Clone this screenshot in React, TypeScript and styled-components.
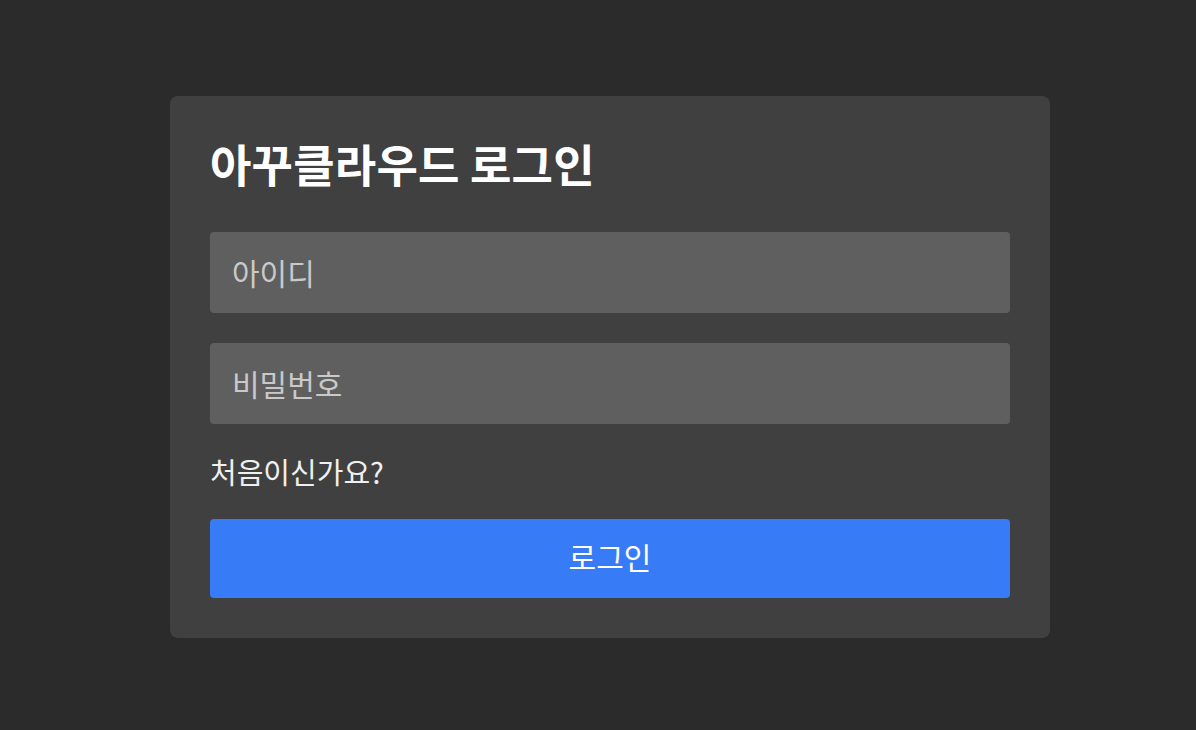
import React, { FC, useState } from 'react';
import styled, { createGlobalStyle } from 'styled-components';

const GlobalStyle = createGlobalStyle`
  body {
    margin: 0;
    background: #2b2b2b;
    font-family: 'Noto Sans CJK KR', 'Noto Sans', sans-serif;
  }
`;

const App: FC = () => {
  const [id, setId] = useState('');
  const [password, setPassword] = useState('');

  return (
    <PageWrapper>
      <GlobalStyle />
      <LoginCard onSubmit={(e) => e.preventDefault()}>
        <LoginTitle>아꾸클라우드 로그인</LoginTitle>
        <LoginInput placeholder="아이디" value={id} onChange={(e) => setId(e.target.value)} />
        <LoginInput
          type="password"
          placeholder="비밀번호"
          value={password}
          onChange={(e) => setPassword(e.target.value)}
        />
        <RegisterText>처음이신가요?</RegisterText>
        <LoginButton type="submit">로그인</LoginButton>
      </LoginCard>
    </PageWrapper>
  );
};

export default App;

const PageWrapper = styled.div`
  min-height: 100vh;
  box-sizing: border-box;
  padding: 4px 0 0 24px;
  display: flex;
  align-items: center;
  justify-content: center;
`;
const LoginCard = styled.form`
  width: 880px;
  box-sizing: border-box;
  padding: 40px;
  background: #404040;
  border-radius: 8px;
  display: flex;
  flex-direction: column;
  gap: 30px;
`;
const LoginTitle = styled.h1`
  margin: 0 0 10px;
  color: #ffffff;
  font-size: 45px;
  font-weight: 700;
  line-height: 56px;
  letter-spacing: 0.2px;
`;
const LoginInput = styled.input`
  height: 81px;
  box-sizing: border-box;
  padding: 0 22px 2px;
  border: none;
  border-radius: 4px;
  background: #5f5f5f;
  color: #ffffff;
  font-family: inherit;
  font-size: 30px;
  outline: none;

  &::placeholder {
    color: #c9c9c9;
  }
`;
const RegisterText = styled.span`
  color: #f0f0f0;
  font-size: 29px;
  line-height: 35px;
  cursor: pointer;
`;
const LoginButton = styled.button`
  height: 79px;
  padding: 0 0 6px;
  border: none;
  border-radius: 4px;
  background: #377bf6;
  color: #ffffff;
  font-family: inherit;
  font-size: 30px;
  cursor: pointer;
`;
